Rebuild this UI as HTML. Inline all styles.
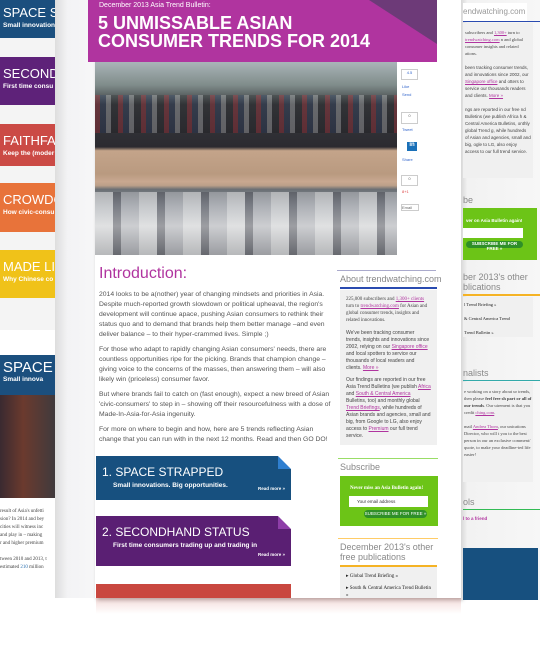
<!DOCTYPE html>
<html><head><meta charset="utf-8"><style>
*{margin:0;padding:0;box-sizing:border-box}
body{width:540px;height:651px;overflow:hidden;background:#fff;font-family:"Liberation Sans",sans-serif;position:relative}
.a{position:absolute}
.bar{position:absolute;left:0;width:60px;color:#fff;overflow:hidden;white-space:nowrap}
.bar b{display:block;font-weight:normal;font-size:13px;padding:9px 0 0 3px}
.bar i{display:block;font-style:normal;font-weight:bold;font-size:6.5px;padding:2px 0 0 3px}
p.t{font-size:6.8px;line-height:10px;color:#555;margin-bottom:5px}
.tr{position:absolute;left:96px;width:195px;color:#fff}
.tr b{display:block;font-weight:normal;font-size:12px;padding:9px 0 0 6px}
.tr i{display:block;font-style:normal;font-weight:bold;font-size:6.5px;padding:3px 0 0 17px}
.tr s{position:absolute;right:6px;bottom:9px;text-decoration:none;font-size:4.5px;font-weight:bold}
.gb{background:#f0f0f0;font-family:"Liberation Serif",serif;font-size:5px;line-height:7px;color:#444;padding:6px}
.hd{font-size:9px;color:#888}
</style></head><body>
<div class="a" style="left:0;top:0;width:60px;height:330px;background:#f4f4f4"></div>
<div class="bar" style="top:0;height:38px;background:#1b4f7e"><b style="padding-top:5px">SPACE ST</b><i>Small innovation</i></div>
<div class="bar" style="top:57px;height:48px;background:#5e2279"><b>SECONDH</b><i>First time consu</i></div>
<div class="bar" style="top:124px;height:42px;background:#cb4a45"><b>FAITHFAC</b><i>Keep the (moder</i></div>
<div class="bar" style="top:183px;height:49px;background:#e8733a"><b>CROWDC</b><i>How civic-consu</i></div>
<div class="bar" style="top:250px;height:48px;background:#f0c219"><b>MADE LIV</b><i>Why Chinese co</i></div>
<div class="a" style="left:0;top:355px;width:58px;height:40px;background:#1b4f7e;color:#fff"><div style="font-size:15px;padding:4px 0 0 3px">SPACE</div><div style="font-size:6.5px;font-weight:bold;padding-left:3px">Small innova</div></div>
<div class="a" style="left:0;top:395px;width:58px;height:103px;background:linear-gradient(90deg,#3a2a30,#6b3a2e 40%,#3c3a3e)"></div>
<div class="a" style="left:0;top:508px;width:58px;font-size:5px;line-height:8px;color:#444;font-family:'Liberation Serif',serif">result of Asia's unfetti<br>sion? In 2014 and bey<br>cities will witness inc<br>and play in – making<br>r and higher premium<br><br>tween 2010 and 2013, t<br>estimated <span style="color:#2a6fb0">210</span> million</div>
<div class="a" style="left:55px;top:0;width:42px;height:598px;background:linear-gradient(90deg,#ddd,#f3f3f5 30%,#f7f7f8)"></div>
<div class="a" style="left:95px;top:0;width:366px;height:598px;background:#fff;box-shadow:2px 2px 4px rgba(0,0,0,.3)"></div>
<div class="a" style="left:88px;top:0;width:349px;height:62px;background:#b0349f;color:#fff;overflow:hidden">
<div style="font-size:7px;padding:2px 0 0 11px">December 2013 Asia Trend Bulletin:</div>
<div style="font-size:18px;font-weight:bold;line-height:18px;padding:5px 0 0 10px">5 UNMISSABLE ASIAN<br>CONSUMER TRENDS FOR 2014</div>
<div class="a" style="right:0;top:0;width:0;height:0;border-top:44px solid #6d3a78;border-left:68px solid transparent"></div>
</div>
<div class="a" style="left:95px;top:62px;width:302px;height:193px;background:linear-gradient(180deg,#aab4b8 0%,#7f8c8a 12%,#3a3c40 22%,#2b2a30 44%,#c4a48a 46%,#b99a80 58%,#c8a890 62%,#bca089 64%,#6a6f74 66%,#9da2a8 75%,#d0d2d4 85%,#7d8084 100%)"></div>
<div class="a" style="left:95px;top:95px;width:302px;height:38px;background:repeating-linear-gradient(90deg,rgba(200,40,50,.3) 0 5px,rgba(30,60,120,.2) 5px 11px,rgba(240,240,240,.25) 11px 16px,rgba(0,0,0,.15) 16px 23px)"></div>
<div class="a" style="left:95px;top:192px;width:302px;height:63px;background:repeating-linear-gradient(90deg,rgba(240,240,240,.5) 0 18px,rgba(60,60,70,.35) 18px 26px,rgba(200,200,205,.4) 26px 44px)"></div>
<div class="a" style="left:397px;top:62px;width:36px;height:193px;background:#fff;font-size:4px;color:#36c">
<div class="a" style="left:4px;top:7px;width:17px;height:11px;border:1px solid #ccc;text-align:center">4.5</div>
<div class="a" style="left:5px;top:22px">Like</div><div class="a" style="left:5px;top:30px">Send</div>
<div class="a" style="left:4px;top:50px;width:17px;height:12px;border:1px solid #ccc;text-align:center;color:#666">0</div>
<div class="a" style="left:5px;top:65px">Tweet</div>
<div class="a" style="left:10px;top:80px;width:10px;height:9px;background:#1a70b8;color:#fff;font-size:6px;font-weight:bold;text-align:center">in</div>
<div class="a" style="left:5px;top:95px">Share</div>
<div class="a" style="left:4px;top:113px;width:17px;height:11px;border:1px solid #ccc;text-align:center;color:#666">0</div>
<div class="a" style="left:5px;top:127px;color:#d44">8+1</div>
<div class="a" style="left:4px;top:142px;width:18px;height:7px;border:1px solid #ccc;color:#666">Email</div>
</div>
<div class="a" style="left:99px;top:265px;font-size:16px;color:#b0349f">Introduction:</div>
<div class="a" style="left:99px;top:290px;width:238px">
<p class="t">2014 looks to be a(nother) year of changing mindsets and priorities in Asia. Despite much-reported growth slowdown or political upheaval, the region's development will continue apace, pushing Asian consumers to rethink their status quo and to demand that brands help them better manage –and even deliver balance – to their hyper-crammed lives. Simple ;)</p>
<p class="t">For those who adapt to rapidly changing Asian consumers' needs, there are countless opportunities ripe for the picking. Brands that champion change – giving voice to the concerns of the masses, then answering them – will also likely win (priceless) consumer favor.</p>
<p class="t">But where brands fail to catch on (fast enough), expect a new breed of Asian 'civic-consumers' to step in – showing off their resourcefulness with a dose of Made-In-Asia-for-Asia ingenuity.</p>
<p class="t">For more on where to begin and how, here are 5 trends reflecting Asian change that you can run with in the next 12 months. Read and then GO DO!</p>
</div>
<div class="tr" style="top:456px;height:44px;background:#17507f"><b>1. SPACE STRAPPED</b><i>Small innovations. Big opportunities.</i><s>Read more »</s></div>
<div class="a" style="left:278px;top:456px;width:0;height:0;border-top:13px solid #fff;border-left:13px solid #2f7fd0"></div>
<div class="tr" style="top:516px;height:50px;background:#5a1f73"><b>2. SECONDHAND STATUS</b><i>First time consumers trading up and trading in</i><s>Read more »</s></div>
<div class="a" style="left:278px;top:516px;width:0;height:0;border-top:13px solid #fff;border-left:13px solid #8e3ea8"></div>
<div class="tr" style="top:584px;height:14px;background:#c9473f"></div>
<div class="a" style="left:96px;top:598px;width:365px;height:53px;background:linear-gradient(180deg,rgba(200,80,70,.2),rgba(255,255,255,0) 30%)"></div>
<div class="a" style="left:337px;top:270px;width:99px;height:2px;border-top:1px solid #aac"></div>
<div class="a hd" style="left:340px;top:274px">About trendwatching.com</div>
<div class="a" style="left:340px;top:287px;width:97px;height:2px;background:#2a4bb0"></div>
<div class="a gb" style="left:340px;top:290px;width:97px;height:155px">
<div style="margin-bottom:6px">225,000 subscribers and <u style="color:#b0349f">1,300+ clients</u> turn to <u style="color:#b0349f">trendwatching.com</u> for Asian and global consumer trends, insights and related innovations.</div>
<div style="font-family:'Liberation Sans';margin-bottom:5px">We've been tracking consumer trends, insights and innovations since 2002, relying on our <u style="color:#b0349f">Singapore office</u> and local spotters to service our thousands of local readers and clients. <u style="color:#b0349f">More »</u></div>
<div style="font-family:'Liberation Sans'">Our findings are reported in our free Asia Trend Bulletins (we publish <u style="color:#b0349f">Africa</u> and <u style="color:#b0349f">South &amp; Central America</u> Bulletins, too) and monthly global <u style="color:#b0349f">Trend Briefings</u>, while hundreds of Asian brands and agencies, small and big, from Google to LG, also enjoy access to <u style="color:#b0349f">Premium</u> our full trend service.</div>
</div>
<div class="a" style="left:338px;top:458px;width:100px;border-top:1px solid #9d6"></div>
<div class="a hd" style="left:340px;top:462px">Subscribe</div>
<div class="a" style="left:340px;top:476px;width:98px;height:50px;background:#6cc417">
<div style="font-size:5px;color:#fff;font-weight:bold;padding:10px 0 0 10px;font-family:'Liberation Serif'">Never miss an Asia Bulletin again!</div>
<div style="margin:5px 0 0 9px;width:79px;height:11px;background:#fff;font-size:4.5px;padding:3px 0 0 8px;color:#333">Your email address</div>
<div style="margin:3px 0 0 24px;width:63px;height:8px;background:#2f8f28;border-radius:4px;font-size:4.5px;color:#fff;text-align:center;line-height:8px">SUBSCRIBE ME FOR FREE »</div>
</div>
<div class="a" style="left:338px;top:538px;width:100px;border-top:1px solid #fc6"></div>
<div class="a hd" style="left:340px;top:542px;line-height:10px">December 2013's other<br>free publications</div>
<div class="a" style="left:340px;top:565px;width:97px;height:2px;background:#f5b325"></div>
<div class="a gb" style="left:340px;top:567px;width:97px;height:31px"><div style="color:#222">▸ Global Trend Briefing »</div><div style="color:#222;margin-top:5px">▸ South &amp; Central America Trend Bulletin »</div></div>
<div class="a" style="left:461px;top:0;width:79px;height:600px;background:linear-gradient(90deg,#d8d8d8,#f2f2f2 8%,#f7f7f7)"></div>
<div class="a" style="left:463px;top:3px;width:64px;height:18px;background:#fff;font-size:8px;color:#999;padding-top:4px">endwatching.com</div>
<div class="a" style="left:463px;top:21px;width:77px;height:1px;background:#2a4bb0"></div>
<div class="a gb" style="left:463px;top:23px;width:70px;height:155px;padding:6px 2px;font-size:4.5px">subscribers and <u style="color:#b0349f">1,300+</u> turn to <u style="color:#b0349f">trendwatching.com</u> n and global consumer insights and related ations.<br><br><span style="font-family:'Liberation Sans'">been tracking consumer trends, and innovations since 2002, our <u style="color:#b0349f">Singapore office</u> and otters to service our thousands readers and clients. <u style="color:#b0349f">More »</u><br><br>ngs are reported in our free nd Bulletins (we publish Africa h &amp; Central America Bulletins, onthly global Trend g, while hundreds of Asian and agencies, small and big, ogle to LG, also enjoy access to our full trend service.</span></div>
<div class="a hd" style="left:463px;top:195px">be</div>
<div class="a" style="left:463px;top:208px;width:74px;height:52px;background:#6cc417;font-size:4.5px;color:#fff;font-weight:bold"><div style="padding:10px 0 0 3px">ver on Asia Bulletin again!</div><div style="margin:5px 0 0 0;width:60px;height:10px;background:#fff"></div><div style="margin:3px 0 0 3px;width:57px;height:7px;background:#2f8f28;border-radius:4px;text-align:center">SUBSCRIBE ME FOR FREE »</div></div>
<div class="a hd" style="left:463px;top:272px;line-height:10px">ber 2013's other<br>blications</div>
<div class="a" style="left:463px;top:294px;width:77px;height:2px;background:#f5b325"></div>
<div class="a gb" style="left:463px;top:297px;width:70px;height:40px;padding:4px 1px;font-size:4.5px;color:#222">l Trend Briefing »<br><br>&amp; Central America Trend<br><br>Trend Bulletin »</div>
<div class="a hd" style="left:463px;top:368px">nalists</div>
<div class="a" style="left:463px;top:380px;width:77px;height:1px;background:#3aa"></div>
<div class="a gb" style="left:463px;top:382px;width:70px;height:100px;padding:6px 1px;font-size:4.5px">e working on a story about ur trends, then please <b>feel free sh part or all of our trends</b>. Our uirement is that you credit <u style="color:#b0349f">ching.com</u>.<br><br>mail <u style="color:#b0349f">Andrea Thom</u>, our unications Director, who will t you to the best person in our an exclusive comment/ quote, to make your deadline-ted life easier!</div>
<div class="a hd" style="left:463px;top:497px">ols</div>
<div class="a" style="left:463px;top:509px;width:77px;height:1px;background:#3b5"></div>
<div class="a" style="left:463px;top:516px;font-size:4.5px;color:#b0349f;font-weight:bold">l to a friend</div>
<div class="a" style="left:463px;top:548px;width:75px;height:52px;background:#17507f"></div>
</body></html>
